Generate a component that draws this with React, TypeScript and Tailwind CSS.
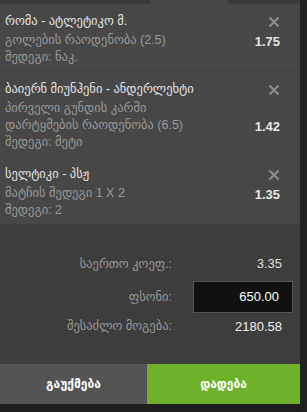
import React from "react";

type Bet = {
  id: number;
  title: string;
  market: string[];
  pick: string;
  odds: string;
};

const bets: Bet[] = [
  {
    id: 1,
    title: "რომა - ატლეტიკო მ.",
    market: ["გოლების რაოდენობა (2.5)"],
    pick: "შედეგი: ნაკ.",
    odds: "1.75",
  },
  {
    id: 2,
    title: "ბაიერნ მიუნჰენი - ანდერლეხტი",
    market: ["პირველი გუნდის კარში", "დარტყმების რაოდენობა (6.5)"],
    pick: "შედეგი: მეტი",
    odds: "1.42",
  },
  {
    id: 3,
    title: "სელტიკი - პსჟ",
    market: ["მატჩის შედეგი 1 X 2"],
    pick: "შედეგი: 2",
    odds: "1.35",
  },
];

function CloseIcon() {
  return (
    <svg width="12" height="12" viewBox="0 0 12 12" className="text-[#8c8c8c]">
      <path d="M1.5 1.5 L10.5 10.5 M10.5 1.5 L1.5 10.5" stroke="currentColor" strokeWidth="2.2" />
    </svg>
  );
}

function BetRow({ bet }: { bet: Bet }) {
  return (
    <div className="border-b border-[#414141] pl-[5px] pr-[20px] pt-[9px] pb-[5px]">
      <div className="flex items-center justify-between">
        <p className="text-[12.5px] leading-[17px] text-[#e4e4e4]">{bet.title}</p>
        <CloseIcon />
      </div>
      <div className="mt-[2px] flex items-end justify-between">
        <div className="text-[12.5px] leading-[17px] text-[#9a9a9a]">
          {bet.market.map((m) => (
            <p key={m}>{m}</p>
          ))}
        </div>
        <p className="text-[13px] font-bold leading-[14px] text-[#e6e6e6]">{bet.odds}</p>
      </div>
      <p className="text-[12.5px] leading-[17px] text-[#9a9a9a]">{bet.pick}</p>
    </div>
  );
}

export default function App() {
  return (
    <div
      className="flex h-[412px] w-[307px] bg-[#1e1e1e]"
      style={{ fontFamily: '"Liberation Sans", "DejaVu Sans", sans-serif' }}
    >
      <div className="flex w-[300px] flex-col">
        <div className="flex h-[4px]">
          <div className="w-[150px] bg-[#3a3a3a]" />
          <div className="w-[78px] bg-[#474747]" />
          <div className="flex-1 bg-[#3a3a3a]" />
        </div>
        <div className="bg-[#474747]">
          {bets.map((b) => (
            <BetRow key={b.id} bet={b} />
          ))}
        </div>
        <div className="flex flex-col bg-[#3d3d3d] pt-[26px] pb-[24px]">
          <div className="flex h-[26px] items-center">
            <span className="w-[172px] text-right text-[12.5px] text-[#9a9a9a]">საერთო კოეფ.:</span>
            <span className="w-[110px] text-right text-[13px] text-[#dedede]">3.35</span>
          </div>
          <div className="mt-[4px] flex h-[32px] items-center">
            <span className="w-[172px] text-right text-[12.5px] text-[#9a9a9a]">ფსონი:</span>
            <div className="ml-[21px] flex h-[32px] w-[100px] items-center justify-end border border-[#555] bg-[#111111] pr-[13px] text-[13px] text-white">
              650.00
            </div>
          </div>
          <div className="flex h-[27px] items-center">
            <span className="w-[172px] text-right text-[12.5px] text-[#9a9a9a]">შესაძლო მოგება:</span>
            <span className="w-[110px] text-right text-[13px] text-[#f0f0f0]">2180.58</span>
          </div>
        </div>
        <div className="flex h-[40px]">
          <button className="flex w-[147px] items-center justify-center bg-[#545454] text-[12px] font-bold text-white">
            გაუქმება
          </button>
          <button className="flex flex-1 items-center justify-center bg-[#6db22a] text-[12px] font-bold text-white">
            დადება
          </button>
        </div>
      </div>
      <div className="w-[7px] bg-[#222222]" />
    </div>
  );
}
